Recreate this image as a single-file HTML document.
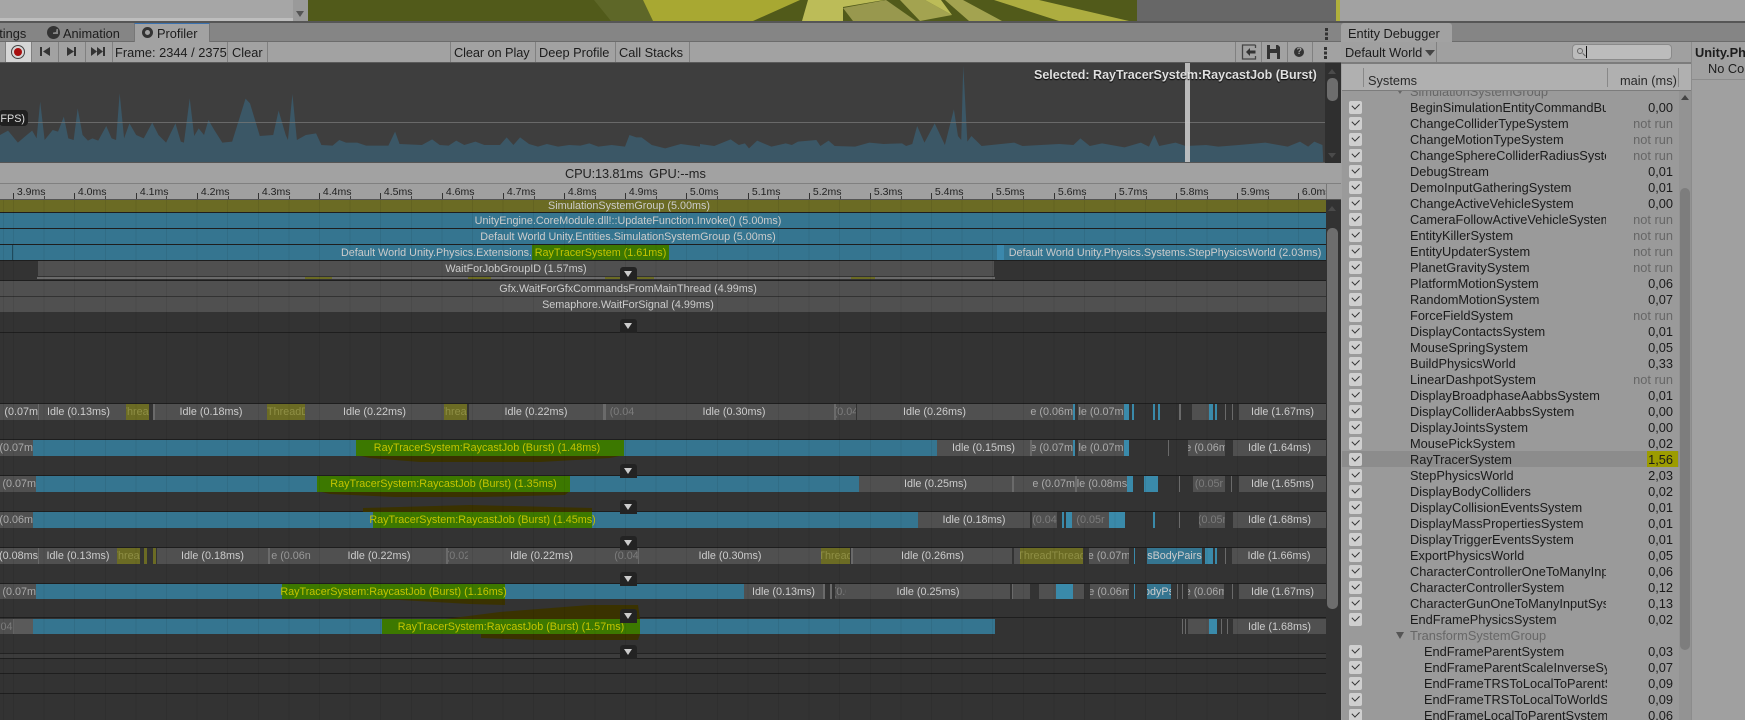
<!DOCTYPE html>
<html><head><meta charset="utf-8"><style>
html,body{margin:0;padding:0;background:#333}
body{position:relative;width:1745px;height:720px;overflow:hidden;font-family:"Liberation Sans",sans-serif;font-size:12.8px;color:#1c1c1c}
div,span,i{position:absolute;box-sizing:border-box}
.t{white-space:nowrap}
.sp{width:1px;background:#808080;top:42px;height:20px}
.rl{top:186px;height:13px;border-left:1px solid transparent;font-size:10.5px;color:#222;white-space:nowrap}
.tk{width:1px;height:6px;top:193px;background:#333}
.tk2{width:1px;height:3px;top:196px;background:#444}
.row{left:0;width:1326px;height:16px;overflow:hidden}
.row div{top:0;height:16px;display:flex;justify-content:center;white-space:nowrap;overflow:hidden;font-size:10.8px;line-height:17px;color:#ccc}
.b{background:#357590}.g{background:#505050}.o{background:#6b6b24;color:#8f8f45!important}.n{background:#3c7800;color:#c4c400!important}
.f{background:#505050;color:#7c7c7c!important}.l{background:#6a6a6a}.k{background:#3a8aaa}
.sep{left:0;width:1326px;height:1px;background:#1e1e1e}
.car{left:620px;width:17px;height:14px;background:#232323;border-radius:3px 3px 0 0}
.car:after{content:"";position:absolute;left:4px;top:4px;border:4.5px solid transparent;border-top:6px solid #ccc;border-bottom:0}
#list{left:1342px;top:91px;width:337px;height:629px;overflow:hidden;background:#9a9a9a}
#in{left:0;top:-8px;width:337px}
.r{position:relative;display:block;width:337px;height:16px;line-height:18px;font-size:12.8px;white-space:nowrap}
.r b{position:absolute;font-weight:normal;left:68px;width:196px;overflow:hidden;color:#1a1a1a}
.r b.d{left:82px;width:183px}
.r u{position:absolute;text-decoration:none;right:6px;color:#1a1a1a}
.r u.x{color:#666}
.r em{position:absolute;left:7px;top:2px;width:13px;height:13px;background:#cfcfcf;border-radius:2px}
.r em:after{content:"";position:absolute;left:3px;top:1.5px;width:6px;height:3.5px;border-left:1.6px solid #333;border-bottom:1.6px solid #333;transform:rotate(-45deg)}
</style></head><body>
<!-- top strip -->
<div style="left:0;top:0;width:293px;height:21px;background:#a6a6a6"></div>
<div style="left:0;top:18px;width:293px;height:3px;background:#bdbdbd"></div>
<div style="left:293px;top:0;width:15px;height:21px;background:#9a9a9a"></div>
<div style="left:296px;top:11px;width:0;height:0;border:4px solid transparent;border-top:6px solid #555;border-bottom:0"></div>
<div style="left:1137px;top:0;width:199px;height:21px;background:#676767"></div>
<div style="left:1336px;top:0;width:4px;height:21px;background:#b0b03c"></div>
<div style="left:1340px;top:0;width:405px;height:21px;background:#a2a2a2"></div>
<svg style="position:absolute;left:308px;top:0" width="829" height="21" viewBox="308 0 829 21">
<rect x="308" width="829" height="21" fill="#515a1a"/>
<polygon points="594,0 611,21 653,21 643,0" fill="#5e6728"/>
<polygon points="643,0 653,21 753,21 800,0" fill="#a8a832"/>
<polygon points="808,0 802,21 843,21 843,7 884,0" fill="#bcbc58"/>
<polygon points="843,8 853,21 916,21 886,0" fill="#98984e"/>
<polygon points="900,0 920,21 952,15 925,0" fill="#a3a350"/>
<polygon points="925,0 952,15 941,0" fill="#bcbc58"/>
<polygon points="945,0 969,21 1002,21 963,0" fill="#a3a350"/>
<polygon points="994,0 1059,21 1129,21 1039,0" fill="#adad40"/>
</svg>
<div style="left:0;top:21px;width:1745px;height:2px;background:#565656"></div>
<!-- tab bar -->
<div style="left:0;top:23px;width:1745px;height:18px;background:#858585"></div>
<div style="left:0;top:41px;width:1745px;height:1px;background:#6c6c6c"></div>
<div class="t" style="left:-20px;top:26px;font-size:12.8px">Settings</div>
<div style="left:47px;top:26px;width:13px;height:13px;border-radius:50%;background:#333"></div>
<div style="left:53px;top:29px;width:5px;height:5px;background:#858585;clip-path:polygon(0 100%,100% 100%,100% 0,70% 0,60% 60%,0 70%)"></div>
<div class="t" style="left:63px;top:26px">Animation</div>
<div style="left:134px;top:23px;width:76px;height:19px;background:#a2a2a2;border-top:1.5px solid #3a72b0;border-right:1px solid #777;border-left:1px solid #777"></div>
<div style="left:142px;top:27px;width:11px;height:11px;border-radius:50%;border:3px solid #333"></div>
<div class="t" style="left:157px;top:26px">Profiler</div>
<div style="left:1325px;top:28px;width:2.5px;height:2.5px;background:#333;box-shadow:0 4.5px #333,0 9px #333"></div>
<!-- toolbar -->
<div style="left:0;top:42px;width:1341px;height:20px;background:#a2a2a2"></div>
<div style="left:0;top:62px;width:1341px;height:1px;background:#5a5a5a"></div>
<div style="left:6px;top:42px;width:25px;height:20px;background:#d6d6d6"></div>
<div style="left:11px;top:45px;width:14px;height:14px;border:1px solid #444;border-radius:50%"></div>
<div style="left:14px;top:48px;width:8px;height:8px;background:#a80f0f;border-radius:50%"></div>
<div class="sp" style="left:5px"></div><div class="sp" style="left:31px"></div><div class="sp" style="left:58px"></div><div class="sp" style="left:85px"></div><div class="sp" style="left:112px"></div><div class="sp" style="left:227px"></div><div class="sp" style="left:267px"></div><div class="sp" style="left:450px"></div><div class="sp" style="left:535px"></div><div class="sp" style="left:615px"></div><div class="sp" style="left:689px"></div><div class="sp" style="left:1235px"></div><div class="sp" style="left:1261px"></div><div class="sp" style="left:1287px"></div><div class="sp" style="left:1312px"></div>
<svg style="position:absolute;left:0;top:42px" width="1341" height="20" viewBox="0 42 1341 20">
<path d="M40 47h2v9h-2zM50 47v9l-7-4.5z" fill="#333"/>
<path d="M67 47v9l7-4.5zM74 47h2v9h-2z" fill="#333"/>
<path d="M91 47v9l6-4.5zM97 47v9l6-4.5zM103 47h2v9h-2z" fill="#333"/>
<path d="M1255.5 45h-13v14h13v-3M1255.5 48v-3" fill="none" stroke="#444" stroke-width="1.3"/>
<path d="M1246 52l4-4v2.500h5.500v3H1250V56z" fill="#333"/>
<path d="M1267 45h11l2 2v12h-13zM1270 45v4h6v-4zM1270 53v6h7v-6z" fill="#333" fill-rule="evenodd"/>
<circle cx="1299" cy="52" r="5" fill="#333"/>
</svg>
<div class="t" style="left:1296.500px;top:46px;font-size:9px;font-weight:bold;color:#a2a2a2">?</div>
<div style="left:1324px;top:47px;width:2.500px;height:2.500px;background:#333;box-shadow:0 4.500px #333,0 9px #333"></div>
<div class="t" style="left:115px;top:45px">Frame: 2344 / 2375</div>
<div class="t" style="left:232px;top:45px">Clear</div>
<div class="t" style="left:454px;top:45px;letter-spacing:-.1px">Clear on Play</div>
<div class="t" style="left:539px;top:45px">Deep Profile</div>
<div class="t" style="left:619px;top:45px">Call Stacks</div>
<!-- graph -->
<svg style="position:absolute;left:0;top:63px" width="1326" height="100" viewBox="0 63 1326 100">
<rect x="0" y="63" width="1326" height="100" fill="#3e3e3e"/>
<g fill="#3b5766">
<polygon transform="scale(0.44643,0.33333)" points="0,486 0,405 18,392 40,428 60,405 72,392 82,415 90,305 100,420 118,390 130,395 143,350 153,415 165,420 174,325 185,405 197,422 207,415 220,422 238,378 250,415 260,420 268,280 278,415 290,370 305,405 322,415 341,368 355,405 372,428 393,370 405,425 412,428 425,295 435,408 445,385 457,405 467,360 480,390 498,428 520,425 550,296 560,310 582,408 612,405 624,332 640,405 645,420 655,282 665,420 685,405 708,400 720,435 745,437 760,420 775,428 800,428 820,437 870,437 885,395 895,432 945,435 968,418 985,435 1005,437 1022,422 1040,435 1065,425 1085,435 1120,435 1135,412 1150,435 1165,412 1185,432 1205,440 1225,432 1250,440 1275,435 1300,437 1320,430 1340,440 1370,435 1400,440 1410,405 1425,412 1437,412 1460,435 1490,445 1525,432 1568,440 1568,486"/>
<polygon transform="translate(700,0) scale(0.40816,0.33333)" points="0,486 0,432 35,438 75,418 95,435 110,430 120,445 140,422 175,440 210,430 225,435 240,425 285,420 295,438 315,422 330,438 380,440 415,428 450,432 495,430 505,438 520,432 532,378 550,428 575,370 600,435 622,328 632,408 640,420 645,197 655,425 665,408 690,438 770,428 790,438 880,432 915,435 932,415 955,438 985,430 1040,442 1080,428 1100,440 1113,405 1125,438 1165,428 1190,438 1240,435 1270,440 1320,435 1385,428 1440,440 1470,425 1490,440 1505,425 1525,435 1527,486"/>
</g>
<rect x="0" y="122" width="1326" height="1" fill="#787878" opacity=".75"/>
<rect x="1185" y="63" width="5" height="99" fill="#c8c8c8" opacity=".9"/>
<rect x="0" y="162" width="1326" height="1" fill="#555"/>
</svg>
<div style="left:1325px;top:63px;width:16px;height:100px;background:#2f2f2f"></div>
<div style="left:1327px;top:78px;width:11px;height:23px;background:#6d6d6d;border-radius:5px"></div>
<div style="left:1328px;top:69px;border:4.500px solid transparent;border-bottom:5px solid #4a4a4a;border-top:0"></div>
<div style="left:1328px;top:153px;border:4.500px solid transparent;border-top:5px solid #4a4a4a;border-bottom:0"></div>
<div style="left:-1px;top:110px;width:29px;height:16px;background:#202020;border-radius:4px"></div>
<div class="t" style="left:-2px;top:113px;width:27px;text-align:right;font-size:10.8px;color:#ddd">FPS)</div>
<div class="t" style="left:1034px;top:68px;font-size:12.5px;font-weight:bold;color:#e0e0e0;text-shadow:0 1px 1px #000">Selected: RayTracerSystem:RaycastJob (Burst)</div>
<!-- status -->
<div style="left:0;top:163px;width:1341px;height:20px;background:#a2a2a2"></div>
<div class="t" style="left:565px;top:166px;color:#222;letter-spacing:-.15px">CPU:13.81ms</div><div class="t" style="left:649px;top:166px;color:#222">GPU:--ms</div>
<div style="left:0;top:183px;width:1341px;height:1px;background:#808080"></div>
<!-- ruler -->
<div style="left:0;top:184px;width:1341px;height:15px;background:#a0a0a0"></div>
<div style="left:0;top:199px;width:1341px;height:1px;background:#555"></div>
<div class="tk" style="left:13px"></div><div class="rl" style="left:13px">&nbsp;3.9ms</div><div class="tk2" style="left:44px"></div>
<div class="tk" style="left:74px"></div><div class="rl" style="left:74px">&nbsp;4.0ms</div><div class="tk2" style="left:105px"></div>
<div class="tk" style="left:136px"></div><div class="rl" style="left:136px">&nbsp;4.1ms</div><div class="tk2" style="left:166px"></div>
<div class="tk" style="left:197px"></div><div class="rl" style="left:197px">&nbsp;4.2ms</div><div class="tk2" style="left:228px"></div>
<div class="tk" style="left:258px"></div><div class="rl" style="left:258px">&nbsp;4.3ms</div><div class="tk2" style="left:289px"></div>
<div class="tk" style="left:319px"></div><div class="rl" style="left:319px">&nbsp;4.4ms</div><div class="tk2" style="left:350px"></div>
<div class="tk" style="left:380px"></div><div class="rl" style="left:380px">&nbsp;4.5ms</div><div class="tk2" style="left:411px"></div>
<div class="tk" style="left:442px"></div><div class="rl" style="left:442px">&nbsp;4.6ms</div><div class="tk2" style="left:472px"></div>
<div class="tk" style="left:503px"></div><div class="rl" style="left:503px">&nbsp;4.7ms</div><div class="tk2" style="left:534px"></div>
<div class="tk" style="left:564px"></div><div class="rl" style="left:564px">&nbsp;4.8ms</div><div class="tk2" style="left:595px"></div>
<div class="tk" style="left:625px"></div><div class="rl" style="left:625px">&nbsp;4.9ms</div><div class="tk2" style="left:656px"></div>
<div class="tk" style="left:686px"></div><div class="rl" style="left:686px">&nbsp;5.0ms</div><div class="tk2" style="left:717px"></div>
<div class="tk" style="left:748px"></div><div class="rl" style="left:748px">&nbsp;5.1ms</div><div class="tk2" style="left:778px"></div>
<div class="tk" style="left:809px"></div><div class="rl" style="left:809px">&nbsp;5.2ms</div><div class="tk2" style="left:840px"></div>
<div class="tk" style="left:870px"></div><div class="rl" style="left:870px">&nbsp;5.3ms</div><div class="tk2" style="left:901px"></div>
<div class="tk" style="left:931px"></div><div class="rl" style="left:931px">&nbsp;5.4ms</div><div class="tk2" style="left:962px"></div>
<div class="tk" style="left:992px"></div><div class="rl" style="left:992px">&nbsp;5.5ms</div><div class="tk2" style="left:1023px"></div>
<div class="tk" style="left:1054px"></div><div class="rl" style="left:1054px">&nbsp;5.6ms</div><div class="tk2" style="left:1084px"></div>
<div class="tk" style="left:1115px"></div><div class="rl" style="left:1115px">&nbsp;5.7ms</div><div class="tk2" style="left:1146px"></div>
<div class="tk" style="left:1176px"></div><div class="rl" style="left:1176px">&nbsp;5.8ms</div><div class="tk2" style="left:1207px"></div>
<div class="tk" style="left:1237px"></div><div class="rl" style="left:1237px">&nbsp;5.9ms</div><div class="tk2" style="left:1268px"></div>
<div class="tk" style="left:1298px"></div><div class="rl" style="left:1298px;width:28px;overflow:hidden">&nbsp;6.0ms</div><div style="left:1326px;top:184px;width:1px;height:15px;background:#777"></div>
<!-- timeline -->
<div style="left:0;top:200px;width:1326px;height:520px;background:#333"></div>
<div style="left:1326px;top:200px;width:15px;height:520px;background:#323232"></div>
<div style="left:1327px;top:228px;width:11px;height:381px;background:#6d6d6d;border-radius:5px"></div>
<div style="left:1328px;top:206px;border:4.500px solid transparent;border-bottom:5px solid #4a4a4a;border-top:0"></div>
<div class="sep" style="top:212px"></div><div class="sep" style="top:228px"></div><div class="sep" style="top:244px"></div><div class="sep" style="top:260px"></div><div class="sep" style="top:280px"></div><div class="sep" style="top:332px"></div><div class="sep" style="top:403px"></div><div class="sep" style="top:439px"></div><div class="sep" style="top:475px"></div><div class="sep" style="top:511px"></div><div class="sep" style="top:547px"></div><div class="sep" style="top:583px"></div><div class="sep" style="top:617px"></div><div class="sep" style="top:653px;background:#222"></div><div class="sep" style="top:658px"></div><div class="sep" style="top:673px"></div><div class="sep" style="top:693px"></div>
<div style="left:0;top:654px;width:1326px;height:4px;background:#3c3c3c"></div>
<!-- dark brush strokes -->
<svg style="position:absolute;left:0;top:0" width="1326" height="720" viewBox="0 0 1326 720" fill="#3a3200">
<polygon points="356,455 624,455 610,458 540,462 420,462 370,458"/>
<polygon points="317,491 570,491 565,495 480,497 395,497 330,494"/>
<polygon points="363,512 592,512 592,508 470,505 400,507 363,508"/>
<polygon points="342,598 505,598 505,605 470,604 400,600"/>
<polygon points="445,619 640,619 638,605 590,605 500,612"/>
<polygon points="481,634 640,634 638,640 540,640 481,638"/>
</svg>
<div class="row" style="top:200px;height:12px"><div class="o" style="left:0;width:1326px;height:12px;line-height:12px;color:#ccc!important;justify-content:flex-start;padding-left:548px">SimulationSystemGroup (5.00ms)</div></div>
<div class="row" style="top:213px;height:15px"><div class="b" style="left:0;width:1326px;padding-right:70px">UnityEngine.CoreModule.dll!::UpdateFunction.Invoke() (5.00ms)</div></div>
<div class="row" style="top:229px;height:15px"><div class="b" style="left:0;width:1326px;padding-right:70px">Default World Unity.Entities.SimulationSystemGroup (5.00ms)</div></div>
<div class="row" style="top:245px;height:15px">
<div class="b" style="left:0;width:1326px"></div>
<div style="left:12px;width:1px;background:#1f4a5c"></div>
<div style="left:330px;width:202px;justify-content:flex-end;background:transparent">Default World Unity.Physics.Extensions.</div>
<div class="n" style="left:532px;width:137px">RayTracerSystem (1.61ms)</div>
<div style="left:997px;width:7px;background:#3b88ac"></div>
<div style="left:1005px;width:320px;background:transparent">Default World Unity.Physics.Systems.StepPhysicsWorld (2.03ms)</div>
</div>
<div class="row" style="top:261px;height:15px"><div class="g" style="left:38px;width:956px">WaitForJobGroupID (1.57ms)</div></div>
<div style="left:37px;top:277px;width:958px;height:2px;background:#6a6a6a"></div>
<div style="left:305px;top:277px;width:27px;height:2px;background:#6b6b24"></div><div style="left:468px;top:277px;width:23px;height:2px;background:#6b6b24"></div><div style="left:605px;top:277px;width:49px;height:2px;background:#6b6b24"></div><div style="left:851px;top:277px;width:24px;height:2px;background:#6b6b24"></div>
<div class="row" style="top:281px;height:15px"><div class="g" style="left:0;width:1326px;padding-right:70px">Gfx.WaitForGfxCommandsFromMainThread (4.99ms)</div></div>
<div class="row" style="top:297px;height:15px"><div class="g" style="left:0;width:1326px;padding-right:70px">Semaphore.WaitForSignal (4.99ms)</div></div>
<!-- row A -->
<div class="row" style="top:404px">
<div class="g" style="left:0;width:38px;justify-content:flex-end">(0.07m</div><div class="l" style="left:38px;width:1px"></div>
<div class="g" style="left:39px;width:79px">Idle (0.13ms)</div><div class="g" style="left:118px;width:8px"></div>
<div class="o" style="left:126px;width:23px">Thread</div><div class="l" style="left:153px;width:2px"></div>
<div class="g" style="left:155px;width:112px">Idle (0.18ms)</div><div class="o" style="left:267px;width:38px;justify-content:flex-start">ThreadD</div>
<div class="g" style="left:305px;width:139px">Idle (0.22ms)</div><div class="o" style="left:444px;width:23px">Thread</div>
<div class="g" style="left:469px;width:134px">Idle (0.22ms)</div><div class="l" style="left:603px;width:3px"></div>
<div class="f" style="left:606px;width:32px">(0.04</div><div class="g" style="left:638px;width:197px;padding-right:5px">Idle (0.30ms)</div>
<div class="l" style="left:834px;width:2px"></div><div class="f" style="left:836px;width:20px">(0.04</div>
<div class="g" style="left:857px;width:155px">Idle (0.26ms)</div><div class="g" style="left:1012px;width:61px;justify-content:flex-end;color:#aaa">e (0.06m</div>
<div class="k" style="left:1073px;width:2px"></div><div class="g" style="left:1078px;width:46px;color:#aaa">le (0.07m</div>
<div class="k" style="left:1124px;width:5px"></div><div class="k" style="left:1132px;width:2px"></div><div class="k" style="left:1153px;width:2px"></div><div class="k" style="left:1158px;width:2px"></div>
<div class="l" style="left:1179px;width:2px"></div><div class="g" style="left:1192px;width:17px"></div><div class="k" style="left:1209px;width:4px"></div><div class="k" style="left:1215px;width:2px"></div><div class="l" style="left:1225px;width:1px"></div><div class="l" style="left:1232px;width:1px"></div>
<div class="g" style="left:1239px;width:87px">Idle (1.67ms)</div></div>
<!-- row B -->
<div class="row" style="top:440px">
<div class="g" style="left:0;width:33px;justify-content:flex-end;color:#aaa">(0.07m</div><div class="b" style="left:33px;width:904px"></div>
<div class="n" style="left:350px;width:274px">RayTracerSystem:RaycastJob (Burst) (1.48ms)</div>
<div style="left:350px;width:6px;background:#357590"></div>
<div class="g" style="left:937px;width:93px">Idle (0.15ms)</div><div class="l" style="left:1030px;width:2px"></div>
<div class="g" style="left:1032px;width:41px;color:#aaa;justify-content:flex-end">e (0.07m</div><div class="k" style="left:1073px;width:2px"></div>
<div class="g" style="left:1078px;width:46px;color:#aaa">le (0.07m</div><div class="k" style="left:1124px;width:5px"></div><div class="l" style="left:1168px;width:1px"></div>
<div class="g" style="left:1188px;width:37px;color:#aaa">e (0.06m</div><div class="g" style="left:1233px;width:93px">Idle (1.64ms)</div></div>
<!-- row C -->
<div class="row" style="top:476px">
<div class="g" style="left:0;width:36px;justify-content:flex-end;color:#aaa">(0.07m</div><div class="b" style="left:36px;width:823px"></div>
<div class="n" style="left:317px;width:253px">RayTracerSystem:RaycastJob (Burst) (1.35ms)</div>
<div class="g" style="left:859px;width:153px">Idle (0.25ms)</div><div class="l" style="left:1012px;width:2px"></div><div class="g" style="left:1014px;width:19px"></div>
<div class="g" style="left:1033px;width:42px;color:#aaa;justify-content:flex-end">e (0.07m</div><div class="l" style="left:1075px;width:2px"></div>
<div class="g" style="left:1077px;width:50px;color:#aaa">le (0.08ms</div><div class="k" style="left:1127px;width:6px"></div><div class="k" style="left:1144px;width:14px"></div><div class="l" style="left:1179px;width:1px"></div>
<div class="f" style="left:1193px;width:32px">(0.05r</div><div class="l" style="left:1231px;width:1px"></div><div class="g" style="left:1239px;width:87px">Idle (1.65ms)</div></div>
<!-- row D -->
<div class="row" style="top:512px">
<div class="g" style="left:0;width:33px;justify-content:flex-end;color:#aaa">(0.06m</div><div class="b" style="left:33px;width:885px"></div>
<div class="n" style="left:373px;width:219px;overflow:visible">RayTracerSystem:RaycastJob (Burst) (1.45ms)</div>
<div class="g" style="left:918px;width:112px">Idle (0.18ms)</div><div class="f" style="left:1032px;width:25px">(0.04</div>
<div class="k" style="left:1062px;width:2px"></div><div class="k" style="left:1066px;width:6px"></div>
<div class="f" style="left:1072px;width:37px">(0.05r</div><div class="k" style="left:1109px;width:16px"></div><div class="k" style="left:1153px;width:2px"></div><div class="l" style="left:1179px;width:1px"></div>
<div class="f" style="left:1199px;width:26px">(0.05r</div><div class="g" style="left:1233px;width:93px">Idle (1.68ms)</div></div>
<!-- row E -->
<div class="row" style="top:548px">
<div class="g" style="left:0;width:38px;justify-content:flex-end">(0.08ms</div><div class="l" style="left:38px;width:1px"></div>
<div class="g" style="left:39px;width:78px">Idle (0.13ms)</div><div class="o" style="left:117px;width:23px">Thread</div><div class="o" style="left:144px;width:3px"></div><div class="o" style="left:153px;width:3px"></div>
<div class="g" style="left:157px;width:111px">Idle (0.18ms)</div><div class="l" style="left:268px;width:2px"></div>
<div class="g" style="left:270px;width:42px;color:#999">e (0.06n</div><div class="g" style="left:312px;width:134px">Idle (0.22ms)</div><div class="l" style="left:446px;width:2px"></div>
<div class="f" style="left:448px;width:20px">(0.02</div><div class="g" style="left:468px;width:147px">Idle (0.22ms)</div><div class="f" style="left:615px;width:23px">(0.04</div><div class="l" style="left:638px;width:1px"></div>
<div class="g" style="left:639px;width:182px">Idle (0.30ms)</div><div class="o" style="left:821px;width:29px">Thread</div><div class="l" style="left:851px;width:2px"></div>
<div class="g" style="left:853px;width:159px">Idle (0.26ms)</div><div class="g" style="left:1014px;width:6px"></div><div class="o" style="left:1020px;width:63px">ThreadThread</div>
<div class="g" style="left:1089px;width:40px;color:#aaa">e (0.07m</div><div class="k" style="left:1134px;width:1px"></div>
<div class="b" style="left:1147px;width:55px">sBodyPairs</div><div class="k" style="left:1205px;width:8px"></div><div class="k" style="left:1215px;width:2px"></div><div class="l" style="left:1225px;width:1px"></div>
<div class="g" style="left:1232px;width:94px">Idle (1.66ms)</div></div>
<!-- row F -->
<div class="row" style="top:584px;height:15px">
<div class="g" style="left:0;width:36px;justify-content:flex-end;color:#aaa">(0.07m</div><div class="b" style="left:36px;width:708px"></div>
<div class="n" style="left:282px;width:223px;overflow:visible">RayTracerSystem:RaycastJob (Burst) (1.16ms)</div>
<div class="g" style="left:744px;width:79px">Idle (0.13ms)</div><div class="l" style="left:823px;width:2px"></div><div class="l" style="left:830px;width:2px"></div>
<div class="f" style="left:835px;width:20px">(0.03</div><div class="g" style="left:846px;width:164px">Idle (0.25ms)</div><div class="l" style="left:1012px;width:1px"></div><div class="g" style="left:1013px;width:17px"></div>
<div class="g" style="left:1039px;width:17px"></div><div class="k" style="left:1056px;width:17px"></div><div class="g" style="left:1073px;width:11px"></div>
<div class="g" style="left:1090px;width:39px;color:#aaa">e (0.06m</div><div class="k" style="left:1134px;width:1px"></div><div class="b" style="left:1147px;width:24px">odyPs</div>
<div class="l" style="left:1177px;width:1px"></div><div class="l" style="left:1182px;width:1px"></div><div class="g" style="left:1188px;width:36px;color:#aaa">e (0.06m</div><div class="l" style="left:1232px;width:1px"></div>
<div class="g" style="left:1239px;width:87px">Idle (1.67ms)</div></div>
<!-- row G -->
<div class="row" style="top:619px;height:15px">
<div class="f" style="left:0;width:13px">04</div><div class="l" style="left:13px;width:1px"></div><div class="l" style="left:14px;width:19px;background:#5a5a5a"></div><div class="b" style="left:33px;width:962px"></div>
<div class="n" style="left:382px;width:258px">RayTracerSystem:RaycastJob (Burst) (1.57ms)</div>
<div class="l" style="left:1182px;width:1px"></div><div class="l" style="left:1185px;width:1px"></div><div class="g" style="left:1188px;width:21px"></div><div class="k" style="left:1209px;width:8px"></div><div class="l" style="left:1221px;width:1px"></div><div class="l" style="left:1227px;width:1px"></div>
<div class="g" style="left:1233px;width:93px">Idle (1.68ms)</div></div>
<!-- grid -->
<div style="left:0;top:200px;width:1326px;height:520px;background:repeating-linear-gradient(90deg,rgba(0,0,0,.07) 0,rgba(0,0,0,.07) 1px,transparent 1px,transparent 30.6px);background-position:13px 0"></div>
<!-- carets -->
<div class="car" style="top:267px"></div><div class="car" style="top:319px"></div><div class="car" style="top:464px"></div><div class="car" style="top:500px"></div><div class="car" style="top:536px"></div><div class="car" style="top:572px"></div><div class="car" style="top:609px"></div><div class="car" style="top:645px"></div>
<!-- right panel -->
<div style="left:1341px;top:42px;width:404px;height:678px;background:#a0a0a0"></div>
<div style="left:1341px;top:23px;width:111px;height:19px;background:#a2a2a2;border-radius:3px 3px 0 0"></div>
<div class="t" style="left:1348px;top:26px">Entity Debugger</div>
<div style="left:1341px;top:62px;width:350px;height:2px;background:#7c7c7c"></div>
<div class="t" style="left:1345px;top:45px">Default World</div>
<div style="left:1425px;top:50px;border:5px solid transparent;border-top:6px solid #444;border-bottom:0"></div>
<div style="left:1436px;top:42px;width:1px;height:20px;background:#808080"></div>
<div style="left:1572px;top:44px;width:100px;height:16px;background:#bcbcbc;border:1px solid #8a8a8a;border-radius:4px"></div>
<div style="left:1577px;top:48px;width:6px;height:6px;border:1.2px solid #666;border-radius:50%"></div>
<div style="left:1582px;top:54px;width:3.5px;height:1.4px;background:#666;transform:rotate(45deg)"></div>
<div style="left:1586px;top:46px;width:1px;height:12px;background:#111"></div>
<div style="left:1691px;top:42px;width:1px;height:678px;background:#8c8c8c"></div>
<div class="t" style="left:1695px;top:45px;font-weight:bold;width:50px;overflow:hidden">Unity.Physics</div>
<div class="t" style="left:1708px;top:61px;width:37px;overflow:hidden">No Components</div>
<div style="left:1692px;top:79px;width:53px;height:1px;background:#8c8c8c"></div>
<div style="left:1342px;top:64px;width:349px;height:26px;background:#b0b0b0"></div>
<div style="left:1342px;top:90px;width:349px;height:1px;background:#7c7c7c"></div>
<div style="left:1363px;top:68px;width:1px;height:19px;background:#888"></div><div style="left:1607px;top:68px;width:1px;height:19px;background:#888"></div><div style="left:1678px;top:68px;width:1px;height:19px;background:#888"></div>
<div class="t" style="left:1368px;top:73px;color:#2a2a2a">Systems</div>
<div class="t" style="left:1620px;top:73px;color:#2a2a2a">main (ms)</div>
<div id="list"><div id="in">
<p class="r" style="margin:0"><span style="left:54px;top:5px;border:4px solid transparent;border-top:6px solid #666;border-bottom:0"></span><b style="color:#666">SimulationSystemGroup</b></p>
<p class="r" style="margin:0"><em></em><b>BeginSimulationEntityCommandBufferSystem</b><u>0,00</u></p>
<p class="r" style="margin:0"><em></em><b>ChangeColliderTypeSystem</b><u class="x">not run</u></p>
<p class="r" style="margin:0"><em></em><b>ChangeMotionTypeSystem</b><u class="x">not run</u></p>
<p class="r" style="margin:0"><em></em><b>ChangeSphereColliderRadiusSystem</b><u class="x">not run</u></p>
<p class="r" style="margin:0"><em></em><b>DebugStream</b><u>0,01</u></p>
<p class="r" style="margin:0"><em></em><b>DemoInputGatheringSystem</b><u>0,01</u></p>
<p class="r" style="margin:0"><em></em><b>ChangeActiveVehicleSystem</b><u>0,00</u></p>
<p class="r" style="margin:0"><em></em><b>CameraFollowActiveVehicleSystem</b><u class="x">not run</u></p>
<p class="r" style="margin:0"><em></em><b>EntityKillerSystem</b><u class="x">not run</u></p>
<p class="r" style="margin:0"><em></em><b>EntityUpdaterSystem</b><u class="x">not run</u></p>
<p class="r" style="margin:0"><em></em><b>PlanetGravitySystem</b><u class="x">not run</u></p>
<p class="r" style="margin:0"><em></em><b>PlatformMotionSystem</b><u>0,06</u></p>
<p class="r" style="margin:0"><em></em><b>RandomMotionSystem</b><u>0,07</u></p>
<p class="r" style="margin:0"><em></em><b>ForceFieldSystem</b><u class="x">not run</u></p>
<p class="r" style="margin:0"><em></em><b>DisplayContactsSystem</b><u>0,01</u></p>
<p class="r" style="margin:0"><em></em><b>MouseSpringSystem</b><u>0,05</u></p>
<p class="r" style="margin:0"><em></em><b>BuildPhysicsWorld</b><u>0,33</u></p>
<p class="r" style="margin:0"><em></em><b>LinearDashpotSystem</b><u class="x">not run</u></p>
<p class="r" style="margin:0"><em></em><b>DisplayBroadphaseAabbsSystem</b><u>0,01</u></p>
<p class="r" style="margin:0"><em></em><b>DisplayColliderAabbsSystem</b><u>0,00</u></p>
<p class="r" style="margin:0"><em></em><b>DisplayJointsSystem</b><u>0,00</u></p>
<p class="r" style="margin:0"><em></em><b>MousePickSystem</b><u>0,02</u></p>
<p class="r" style="margin:0;background:#8c8c8c"><span style="left:305px;top:0;width:31px;height:16px;background:#9c9c00"></span><em></em><b>RayTracerSystem</b><u>1,56</u></p>
<p class="r" style="margin:0"><em></em><b>StepPhysicsWorld</b><u>2,03</u></p>
<p class="r" style="margin:0"><em></em><b>DisplayBodyColliders</b><u>0,02</u></p>
<p class="r" style="margin:0"><em></em><b>DisplayCollisionEventsSystem</b><u>0,01</u></p>
<p class="r" style="margin:0"><em></em><b>DisplayMassPropertiesSystem</b><u>0,01</u></p>
<p class="r" style="margin:0"><em></em><b>DisplayTriggerEventsSystem</b><u>0,01</u></p>
<p class="r" style="margin:0"><em></em><b>ExportPhysicsWorld</b><u>0,05</u></p>
<p class="r" style="margin:0"><em></em><b>CharacterControllerOneToManyInputSystem</b><u>0,06</u></p>
<p class="r" style="margin:0"><em></em><b>CharacterControllerSystem</b><u>0,12</u></p>
<p class="r" style="margin:0"><em></em><b>CharacterGunOneToManyInputSystem</b><u>0,13</u></p>
<p class="r" style="margin:0"><em></em><b>EndFramePhysicsSystem</b><u>0,02</u></p>
<p class="r" style="margin:0"><span style="left:54px;top:5px;border:4.500px solid transparent;border-top:7px solid #555;border-bottom:0"></span><b style="color:#666">TransformSystemGroup</b></p>
<p class="r" style="margin:0"><em></em><b class="d">EndFrameParentSystem</b><u>0,03</u></p>
<p class="r" style="margin:0"><em></em><b class="d">EndFrameParentScaleInverseSystem</b><u>0,07</u></p>
<p class="r" style="margin:0"><em></em><b class="d">EndFrameTRSToLocalToParentSystem</b><u>0,09</u></p>
<p class="r" style="margin:0"><em></em><b class="d">EndFrameTRSToLocalToWorldSystem</b><u>0,09</u></p>
<p class="r" style="margin:0"><em></em><b class="d">EndFrameLocalToParentSystem</b><u>0,06</u></p>
</div></div>
<div style="left:1679px;top:91px;width:12px;height:629px;background:#939393"></div>
<div style="left:1680px;top:188px;width:10px;height:462px;background:#7d7d7d;border-radius:5px"></div>
<div style="left:1681px;top:95px;border:4px solid transparent;border-bottom:5px solid #444;border-top:0"></div>
<div style="left:1691px;top:91px;width:1px;height:629px;background:#8c8c8c"></div>
</body></html>
